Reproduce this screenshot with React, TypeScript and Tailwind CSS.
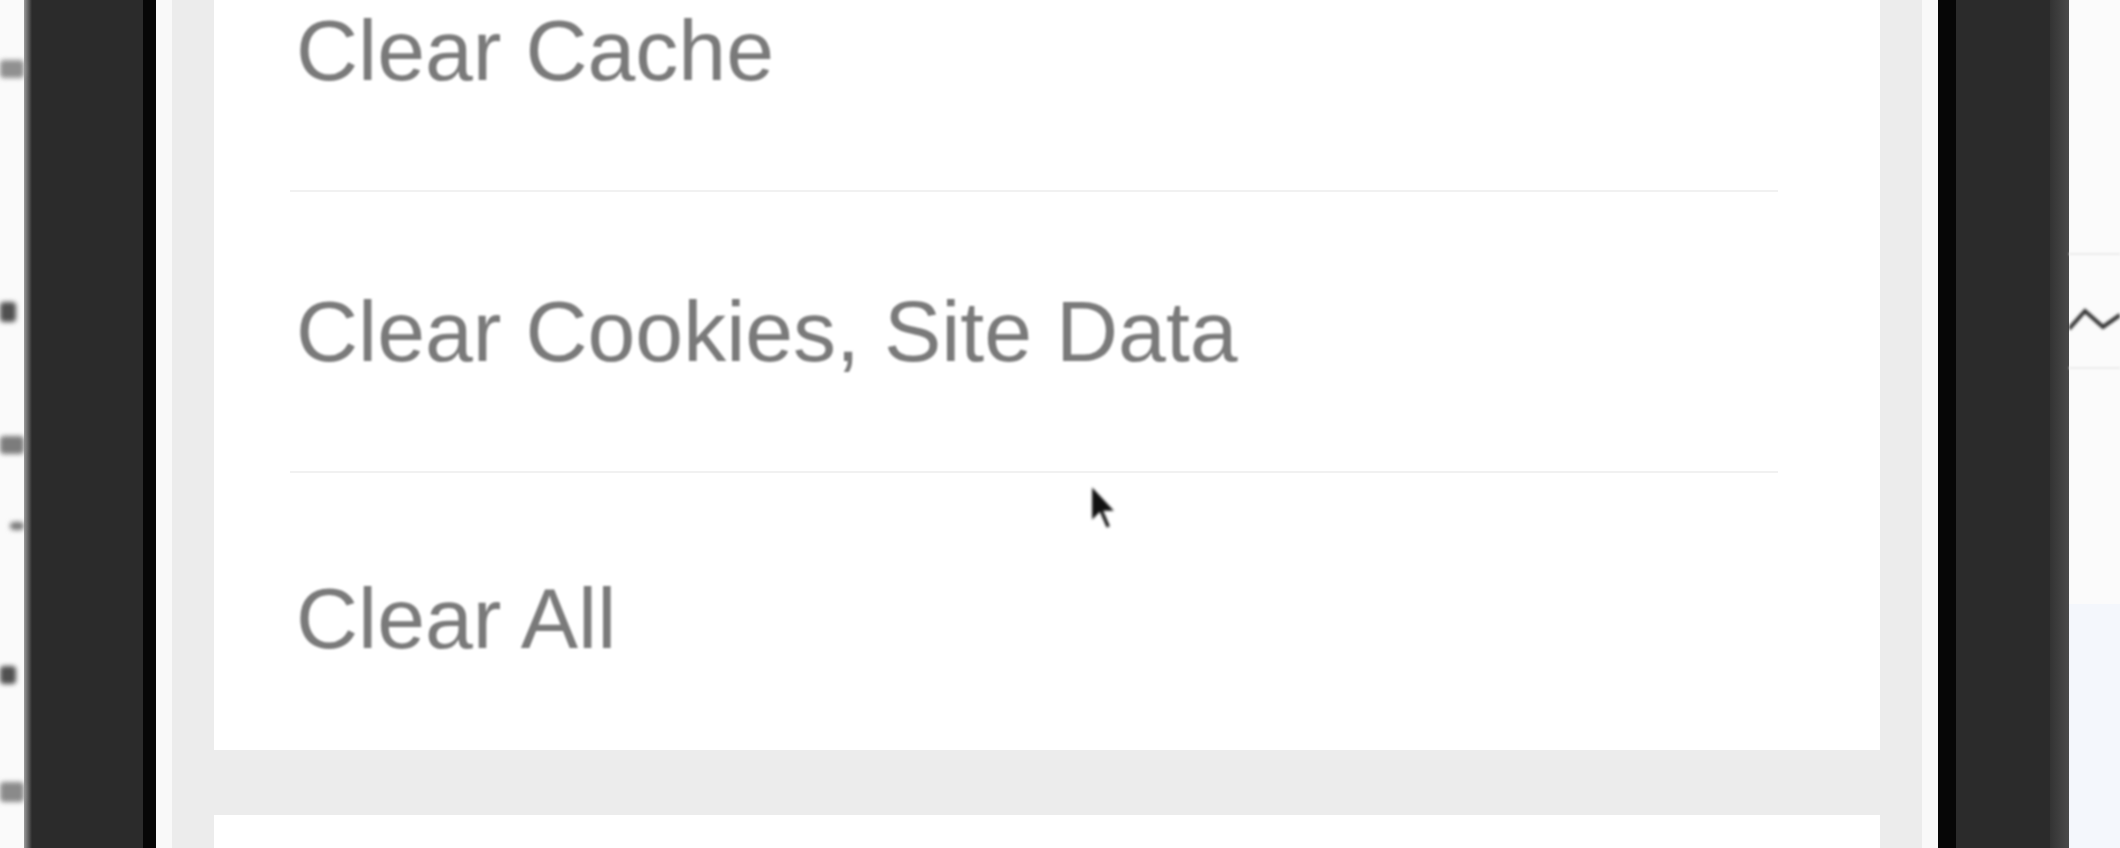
const rows = [
  { label: "Clear Cache", pad: "pt-[96px]", height: "h-[281px]", divider: true },
  { label: "Clear Cookies, Site Data", pad: "pt-[96px]", height: "h-[281px]", divider: true },
  { label: "Clear All", pad: "pt-[102px]", height: "flex-1", divider: false },
];

// scraps of the neighbouring screen that peek in at the far left
const leftMarks = [
  { gap: "h-[60px]", mark: "h-[18px] w-[24px] bg-[#909090]" },
  { gap: "h-[224px]", mark: "h-[20px] w-[16px] bg-[#505050]" },
  { gap: "h-[114px]", mark: "h-[18px] w-[24px] bg-[#7c7c7c]" },
  { gap: "h-[68px]", mark: "ml-[10px] h-[8px] w-[14px] bg-[#777]" },
  { gap: "h-[136px]", mark: "h-[18px] w-[16px] bg-[#505050]" },
  { gap: "h-[98px]", mark: "h-[20px] w-[24px] bg-[#8a8a8a]" },
];

function LeftEdge() {
  return (
    <div className="flex w-[24px] shrink-0 flex-col bg-[#fafafa]">
      {leftMarks.map((m, i) => (
        <div key={i} className="flex flex-col">
          <div className={m.gap} />
          <div className={`${m.mark} rounded-[4px] blur-[2.5px]`} />
        </div>
      ))}
    </div>
  );
}

function RightEdge() {
  return (
    <div className="flex w-[51px] shrink-0 flex-col bg-[#fbfbfb]">
      <div className="h-[253px]" />
      <div className="h-[2px] bg-[#ececec] blur-[1px]" />
      <div className="h-[46px]" />
      <svg width="51" height="36" viewBox="0 0 51 36" className="blur-[1.5px]">
        <polyline points="0,28 16,10 34,26 51,14" fill="none" stroke="#333" strokeWidth="4" />
      </svg>
      <div className="h-[30px]" />
      <div className="h-[2px] bg-[#ececec] blur-[1px]" />
      <div className="h-[235px]" />
      <div className="flex-1 bg-[#f4f7fc]" />
    </div>
  );
}

function Cursor() {
  return (
    <svg
      className="absolute left-[1088px] top-[482px] blur-[1.5px]"
      width="32"
      height="50"
      viewBox="0 0 13 21"
    >
      <path d="M1 1 L1 17 L4.6 13.4 L7.4 19.8 L9.6 18.8 L6.9 12.6 L11.8 12.6 Z" fill="#111" stroke="#fff" strokeWidth="1" />
    </svg>
  );
}

export default function App() {
  return (
    <div className="relative flex h-[848px] w-[2120px] overflow-hidden bg-white font-['Liberation_Sans',Arial,sans-serif]">
      <LeftEdge />

      {/* phone bezel, left */}
      <div className="flex w-[132px] shrink-0">
        <div className="w-[8px] bg-[linear-gradient(to_right,#9a9a9a,#2c2c2c)]" />
        <div className="flex-1 bg-[#2b2b2b]" />
        <div className="w-[13px] bg-[#060606]" />
      </div>

      {/* screen */}
      <div className="flex flex-1 flex-col border-x-[16px] border-[#f9f9f9] bg-[#ececec] px-[42px]">
        <div className="-mt-[89px] flex h-[839px] shrink-0 flex-col bg-white">
          {rows.map((row) => (
            <div
              key={row.label}
              className={`${row.height} ${row.pad} ml-[76px] mr-[102px] pl-[6px] ${
                row.divider ? "shrink-0 border-b-2 border-[#f1f1f1]" : ""
              }`}
            >
              <span className="block text-[86px] leading-[86px] text-[#7a7a7a] blur-[1.2px]">
                {row.label}
              </span>
            </div>
          ))}
        </div>
        <div className="mt-[65px] flex-1 bg-white" />
      </div>

      {/* phone bezel, right */}
      <div className="flex w-[131px] shrink-0">
        <div className="w-[18px] bg-[#060606]" />
        <div className="flex-1 bg-[#2b2b2b]" />
        <div className="w-[19px] bg-[linear-gradient(to_right,#333,#4a4a4a)]" />
      </div>

      <RightEdge />
      <Cursor />
    </div>
  );
}
